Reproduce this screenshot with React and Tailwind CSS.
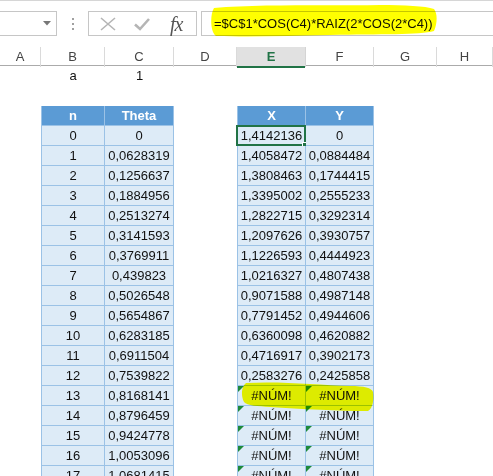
import React from "react";

const rows = [
  ["0", "0", "1,4142136", "0"],
  ["1", "0,0628319", "1,4058472", "0,0884484"],
  ["2", "0,1256637", "1,3808463", "0,1744415"],
  ["3", "0,1884956", "1,3395002", "0,2555233"],
  ["4", "0,2513274", "1,2822715", "0,3292314"],
  ["5", "0,3141593", "1,2097626", "0,3930757"],
  ["6", "0,3769911", "1,1226593", "0,4444923"],
  ["7", "0,439823", "1,0216327", "0,4807438"],
  ["8", "0,5026548", "0,9071588", "0,4987148"],
  ["9", "0,5654867", "0,7791452", "0,4944606"],
  ["10", "0,6283185", "0,6360098", "0,4620882"],
  ["11", "0,6911504", "0,4716917", "0,3902173"],
  ["12", "0,7539822", "0,2583276", "0,2425858"],
  ["13", "0,8168141", "#NÚM!", "#NÚM!"],
  ["14", "0,8796459", "#NÚM!", "#NÚM!"],
  ["15", "0,9424778", "#NÚM!", "#NÚM!"],
  ["16", "1,0053096", "#NÚM!", "#NÚM!"],
  ["17", "1,0681415", "#NÚM!", "#NÚM!"],
];

const cols = ["A", "B", "C", "D", "E", "F", "G", "H"];
const gridCols = "grid grid-cols-[41px_64px_69px_63px_69px_68px_63px_1fr]";

function Tri() {
  return (
    <svg className="absolute left-0 top-0" width="6" height="6" viewBox="0 0 6 6">
      <polygon points="0,0 6,0 0,6" fill="#1e8a3a" />
    </svg>
  );
}

function DataCell({ children, left, err, selected }) {
  return (
    <div
      className={
        "relative h-[20px] flex items-center justify-center bg-[#ddebf7] border-b border-r border-[#9bc2e6] " +
        (left ? "border-l " : "")
      }
    >
      {err && <Tri />}
      <span>{children}</span>
      {selected && (
        <>
          <div className="absolute -left-[2px] -top-[1px] w-[70px] h-[21px] border-2 border-[#217346]" />
          <div className="absolute -right-[3px] -bottom-[3px] w-[6px] h-[6px] bg-[#217346] border border-white" />
        </>
      )}
    </div>
  );
}

function HeadCell({ children, left }) {
  return (
    <div
      className={
        "h-[20px] flex items-center justify-center bg-[#5b9bd5] text-white font-bold border-b border-r border-[#9bc2e6] " +
        (left ? "border-l " : "")
      }
    >
      {children}
    </div>
  );
}

export default function App() {
  return (
    <div className="relative w-[493px] h-[476px] overflow-hidden bg-white text-[13px] text-[#111] font-['Liberation_Sans',Arial,sans-serif]">
      {/* toolbar */}
      <div className="border-t border-[#d6d6d6] h-[11px]" />
      <div className="flex h-[25px] items-stretch">
        <div className="w-[57px] border-y border-r border-[#c6c6c6] flex items-center justify-end pr-[5px]">
          <svg width="8" height="5" viewBox="0 0 8 5">
            <polygon points="0,0 8,0 4,4.5" fill="#777" />
          </svg>
        </div>
        <div className="w-[31px] flex flex-col items-center justify-center gap-[3px]">
          <div className="w-[2px] h-[2px] bg-[#a0a0a0]" />
          <div className="w-[2px] h-[2px] bg-[#a0a0a0]" />
          <div className="w-[2px] h-[2px] bg-[#a0a0a0]" />
        </div>
        <div className="w-[109px] border border-[#c6c6c6] flex items-center">
          <svg className="ml-[11px]" width="16" height="14" viewBox="0 0 16 14">
            <path d="M1 1 L15 13 M15 1 L1 13" stroke="#b5b5b5" strokeWidth="1.6" fill="none" />
          </svg>
          <svg className="ml-[18px]" width="16" height="14" viewBox="0 0 16 14">
            <path d="M1 7.5 L6 12 L15 2" stroke="#b5b5b5" strokeWidth="2.6" fill="none" />
          </svg>
          <span className="ml-[20px] text-[20px] leading-none italic text-[#555] font-['Liberation_Serif',serif] tracking-[-1px]">
            fx
          </span>
        </div>
        <div className="ml-[4px] flex-1 border-y border-l border-[#c6c6c6] flex items-center pl-[12px] text-[13px]">
          =$C$1*COS(C4)*RAIZ(2*COS(2*C4))
        </div>
      </div>
      <div className="h-[11px]" />

      {/* column headers */}
      <div className={gridCols + " h-[19px] border-b border-[#ababab] text-[#444]"}>
        {cols.map((c) =>
          c === "E" ? (
            <div
              key={c}
              className="relative flex items-center justify-center bg-[#e1e1e1] border-r border-[#d4d4d4] text-[#217346] font-bold"
            >
              {c}
              <div className="absolute left-0 right-0 -bottom-px h-[2px] bg-[#217346]" />
            </div>
          ) : (
            <div key={c} className="flex items-center justify-center border-r border-[#dadada]">
              {c}
            </div>
          )
        )}
      </div>

      {/* row 1 */}
      <div className={gridCols + " h-[20px]"}>
        <div />
        <div className="flex items-center justify-center">a</div>
        <div className="flex items-center justify-center">1</div>
        <div /><div /><div /><div /><div />
      </div>
      {/* row 2 */}
      <div className="h-[20px]" />
      {/* table header */}
      <div className={gridCols}>
        <div />
        <HeadCell left>n</HeadCell>
        <HeadCell>Theta</HeadCell>
        <div />
        <HeadCell left>X</HeadCell>
        <HeadCell>Y</HeadCell>
        <div /><div />
      </div>
      {rows.map((r, i) => {
        const err = r[2] === "#NÚM!";
        return (
          <div key={i} className={gridCols}>
            <div />
            <DataCell left>{r[0]}</DataCell>
            <DataCell>{r[1]}</DataCell>
            <div />
            <DataCell left err={err} selected={i === 0}>
              {r[2]}
            </DataCell>
            <DataCell err={err}>{r[3]}</DataCell>
            <div /><div />
          </div>
        );
      })}

      {/* highlighter marks */}
      <svg className="absolute left-0 top-0 pointer-events-none mix-blend-multiply" width="493" height="476" viewBox="0 0 493 476">
        <path
          d="M214 8 C260 4 330 6 380 5 C405 5 425 6 434 9 C438 14 437 24 434 31 C420 35 380 34 330 35 C290 36 250 37 216 36 C210 32 210 14 214 8 Z"
          fill="#ffff00"
        />
        <path
          d="M246 383 C280 381 320 385 350 386 C364 386 372 388 373 392 C374 400 373 408 368 411 C340 411 300 409 270 407 C258 406 247 406 244 402 C241 396 241 387 246 383 Z"
          fill="#ffff00"
        />
      </svg>
    </div>
  );
}
